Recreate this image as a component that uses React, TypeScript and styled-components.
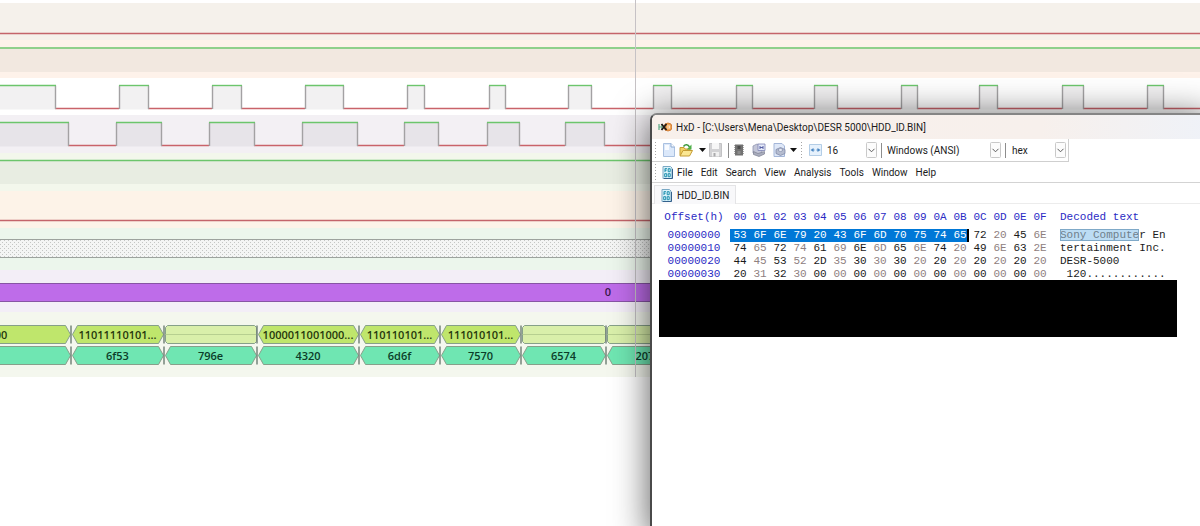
import React from "react";
import styled, { createGlobalStyle, css } from "styled-components";

const GlobalStyle = createGlobalStyle`
  *, *::before, *::after { box-sizing: border-box; }
  html, body, #root { height: 100%; }
  body {
    margin: 0;
    background: #ffffff;
    font-family: Roboto, "Open Sans", sans-serif;
  }
  button, select { font: inherit; color: inherit; }
`;

/* ---------- Logic analyser ---------- */

const Desktop = styled.main`
  position: relative;
  min-height: 100%;
  overflow: hidden;
`;

const Analyser = styled.section`
  position: relative;
  display: flex;
  flex-direction: column;
  padding-top: 3px;
`;

const Track = styled.div<{ $height: number; $tint: string }>`
  height: ${(p) => p.$height}px;
  background: ${(p) => p.$tint};
`;

const Plot = styled.svg`
  display: block;
  width: 100%;
  height: 100%;
  text {
    font-family: "Open Sans", "Noto Sans", sans-serif;
    font-size: 11px;
    font-weight: 600;
    text-anchor: middle;
  }
`;

const Cursor = styled.div`
  position: absolute;
  top: 0;
  bottom: 0;
  left: 635px;
  width: 1px;
  background: #c6c2c5;
`;

const GREEN = "#6cc56c";
const RED = "#c9636a";
const EDGE = "#a3a1a3";
const FAR = 4000;

type Pulse = [number, number];

const clockPulses: Pulse[] = [
  [-2, 55], [119, 148], [212, 241], [305, 343], [407, 424], [489, 505],
  [568, 591], [653, 671], [736, 752], [814, 837], [901, 917], [979, 997],
  [1062, 1083], [1147, 1163],
];

const strobePulses: Pulse[] = [
  [-2, 68], [116, 161], [209, 254], [302, 357], [404, 438], [487, 519], [565, 604],
];

function Wave({ pulses, fill }: { pulses: Pulse[]; fill: string }) {
  const high = 7.5;
  const low = 30.5;
  return (
    <Plot aria-hidden="true">
      {pulses.map(([a, b], i) => {
        const next = pulses[i + 1]?.[0] ?? FAR;
        return (
          <g key={a} strokeWidth="1.4">
            <rect x={a} y={high} width={b - a} height={low - high + 1} fill={fill} />
            <path d={`M${b} ${low}H${next}`} stroke={RED} />
            <path d={`M${a + 0.5} ${high}V${low + 0.5}M${b + 0.5} ${high}V${low + 0.5}`} stroke={EDGE} />
            <path d={`M${a} ${high}H${b + 1}`} stroke={GREEN} />
          </g>
        );
      })}
    </Plot>
  );
}

function Level({ y, color, under }: { y: number; color: string; under?: [number, number, string] }) {
  return (
    <Plot aria-hidden="true">
      {under && <rect x="0" y={under[0]} width="100%" height={under[1]} fill={under[2]} />}
      <line x1="0" x2="100%" y1={y} y2={y} stroke={color} strokeWidth="1.5" />
    </Plot>
  );
}

type BusValue = { from: number; to: number; text?: string; at?: number; open?: boolean };

const edges = [71, 164, 257, 359, 440, 521, 606];

const bits: BusValue[] = [
  { from: -40, to: 71, text: "00", at: 1 },
  { from: 71, to: 164, text: "11011110101..." },
  { from: 164, to: 257, open: true },
  { from: 257, to: 359, text: "1000011001000..." },
  { from: 359, to: 440, text: "110110101..." },
  { from: 440, to: 521, text: "111010101..." },
  { from: 521, to: 606, open: true },
  { from: 606, to: 700, open: true },
];

const words: BusValue[] = [
  { from: -40, to: 71 },
  { from: 71, to: 164, text: "6f53" },
  { from: 164, to: 257, text: "796e" },
  { from: 257, to: 359, text: "4320" },
  { from: 359, to: 440, text: "6d6f" },
  { from: 440, to: 521, text: "7570" },
  { from: 521, to: 606, text: "6574" },
  { from: 606, to: 690, text: "2072" },
];

function Bus({ y, values, fill, ink }: { y: number; values: BusValue[]; fill: string; ink: string }) {
  return (
    <g>
      {values.map(({ from, to, text, at, open }) => {
        const a = from + 1.5;
        const b = to - 0.5;
        const k = open ? 2 : 5;
        const mid = y + 9;
        const end = y + 18;
        const d = open
          ? `M${a} ${y + k}L${a + k} ${y}H${b - k}L${b} ${y + k}V${end - k}L${b - k} ${end}H${a + k}L${a} ${end - k}Z`
          : `M${a} ${mid}L${a + k} ${y}H${b - k}L${b} ${mid}L${b - k} ${end}H${a + k}Z`;
        return (
          <g key={from}>
            <path d={d} fill={open ? "#d9efaa" : fill} stroke="#86a08a" />
            {open && <path d={`M${a} ${mid}H${b}`} stroke="#b7cf90" />}
            {text && <text x={at ?? (from + to) / 2} y={y + 13} fill={ink}>{text}</text>}
          </g>
        );
      })}
      {edges.map((x) => (
        <path key={x} d={`M${x} ${y}V${y + 18}`} stroke="#75857a" strokeWidth="1.5" />
      ))}
    </g>
  );
}

function LogicAnalyser() {
  return (
    <Analyser aria-label="Logic analyser">
      <Track $height={37} $tint="#fdf2ea">
        <Level y={30.5} color="#c4646a" under={[0, 37, "#f5f1eb"]} />
      </Track>
      <Track $height={38} $tint="#fef2ea">
        <Level y={8} color={GREEN} under={[9, 23, "#f2e8e0"]} />
      </Track>
      <Track $height={37} $tint="#ffffff">
        <Wave pulses={clockPulses} fill="#f2f1f2" />
      </Track>
      <Track $height={38} $tint="#f3f0f4">
        <Wave pulses={strobePulses} fill="#e7e4e9" />
      </Track>
      <Track $height={38} $tint="#f3f7ec">
        <Level y={7.5} color={GREEN} under={[8, 23, "#e8ede2"]} />
      </Track>
      <Track $height={37} $tint="#fdf3e8">
        <Level y={29.5} color="#c4646a" />
      </Track>
      <Track $height={42} $tint="#ecf6ec">
        <Plot aria-hidden="true">
          <defs>
            <pattern id="speckle" width="4" height="4" patternUnits="userSpaceOnUse">
              <rect width="4" height="4" fill="#f4f5f4" />
              <rect width="1" height="1" fill="#c4c6c4" />
              <rect x="2" y="2" width="1" height="1" fill="#c4c6c4" />
            </pattern>
          </defs>
          <rect x="-2" y="11.5" width="110%" height="18" fill="url(#speckle)" stroke="#9da39e" />
        </Plot>
      </Track>
      <Track $height={42} $tint="#f3eef7">
        <Plot>
          <rect x="-2" y="13.5" width="110%" height="18" fill="#be6ce9" stroke="#8754a4" />
          <text x="608" y="26" fill="#38184a">0</text>
        </Plot>
      </Track>
      <Track $height={65} $tint="#f4f7ee">
        <Plot>
          <Bus y={13.5} values={bits} fill="#bfe66c" ink="#26360c" />
          <Bus y={34.5} values={words} fill="#6fe6b2" ink="#0b3d29" />
        </Plot>
      </Track>
      <Cursor />
    </Analyser>
  );
}

/* ---------- Hex editor window ---------- */

const Window = styled.section`
  position: absolute;
  top: 113px;
  left: 650px;
  right: -10px;
  bottom: -10px;
  display: flex;
  flex-direction: column;
  background: #ffffff;
  border: 2px solid #4a4a4a;
  border-top-color: #858585;
  border-radius: 7px 0 0 0;
  box-shadow: 0 4px 36px rgba(0, 0, 0, 0.66);
  color: #1c1c1c;
  font-size: 10px;
  overflow: hidden;
`;

const TitleBar = styled.header`
  display: flex;
  align-items: center;
  gap: 4px;
  height: 24px;
  padding-left: 6px;
  background: linear-gradient(90deg, #f8f0eb 0%, #f7f0ec 70%, #eff2f8 100%);
  white-space: nowrap;
`;

const Title = styled.h1`
  margin: 0;
  font-size: 10px;
  font-weight: 400;
`;

const Toolbar = styled.div`
  display: flex;
  align-items: center;
  align-self: flex-start;
  height: 23px;
  padding-right: 2px;
  border-right: 1px solid #cfcfcf;
  border-bottom: 1px solid #cfcfcf;
`;

const Grip = styled.span`
  width: 1px;
  height: 17px;
  margin: 0 6px 0 3px;
  background: repeating-linear-gradient(#a6a6a6 0 1px, transparent 1px 3px);
`;

const Divider = styled.span<{ $after?: number }>`
  width: 1px;
  height: 15px;
  margin: 0 ${(p) => p.$after ?? 0}px 0 4px;
  background: #8d8d8d;
`;

const ToolButton = styled.button<{ $width?: number }>`
  display: grid;
  place-items: center;
  width: ${(p) => p.$width ?? 20}px;
  height: 18px;
  padding: 0;
  border: 0;
  background: none;
`;

const Picker = styled.label<{ $width: number }>`
  display: grid;
  grid-template-columns: 1fr 11px;
  align-items: center;
  width: ${(p) => p.$width}px;
  height: 18px;
`;

const PickerSelect = styled.select`
  grid-area: 1 / 1 / 2 / 3;
  height: 18px;
  padding: 0 12px 0 5px;
  border: 0;
  background: none;
  appearance: none;
`;

const PickerArrow = styled.svg`
  grid-area: 1 / 2;
  pointer-events: none;
`;

const MenuBar = styled.nav`
  display: flex;
  align-items: center;
  height: 21px;
  border-bottom: 1px solid #d3d3d3;
`;

const MenuItem = styled.button`
  height: 18px;
  padding: 0 4px;
  border: 0;
  background: none;
`;

const TabStrip = styled.div`
  display: flex;
  height: 21px;
  padding: 2px 0 0 2px;
  border-bottom: 1px solid #ececec;
`;

const Tab = styled.button`
  display: flex;
  align-items: center;
  gap: 5px;
  height: 19px;
  padding: 0 6px;
  border: 1px solid #e4e4e6;
  border-bottom: 0;
  background: #f8f8fa;
`;

const Editor = styled.div`
  padding: 7px 31px 0 7px;
  font-family: "Liberation Mono", monospace;
`;

const HexTable = styled.table`
  margin: 0 0 -1px 3px;
  border-collapse: collapse;
  table-layout: fixed;
  font-size: 11px;
  line-height: 13px;
  th, td { padding: 0; font-weight: 400; text-align: center; white-space: pre; }
  thead { color: #2a2ac4; }
  thead th { height: 18px; padding-bottom: 5px; }
  tbody th { color: #2a2ac4; }
  th:first-child { padding-right: 4px; }
`;

const OffsetCol = styled.col`width: 68px;`;
const ByteCol = styled.col`width: 20px;`;
const TextCol = styled.col`width: 120px;`;

const Byte = styled.td<{ $dim: boolean; $picked: boolean; $caret: boolean }>`
  color: ${(p) => (p.$dim ? "#8e8080" : "#1a1a1a")};
  ${(p) => p.$picked && css`background: #0078d7; color: #ffffff;`}
  ${(p) => p.$caret && css`background: linear-gradient(90deg, #0078d7 17px, #000000 17px 19px, transparent 19px);`}
`;

const Decoded = styled.td`
  && { padding-left: 10px; text-align: left; }
`;

const DecodedHead = styled.th`
  && { padding-left: 10px; text-align: left; }
`;

const Marked = styled.mark`
  background: #bcdcf4;
  color: #6f7f8c;
  outline: 1px solid #7fa9c8;
  outline-offset: -1px;
`;

const Redaction = styled.div`
  position: relative;
  height: 57px;
  background: #000000;
`;

const columns = Array.from({ length: 16 }, (_, i) => "0" + i.toString(16).toUpperCase());

const rows = [
  { offset: "00000000", bytes: "53 6F 6E 79 20 43 6F 6D 70 75 74 65 72 20 45 6E", marked: "Sony Compute", text: "r En", picked: 12 },
  { offset: "00000010", bytes: "74 65 72 74 61 69 6E 6D 65 6E 74 20 49 6E 63 2E", text: "tertainment Inc.", picked: 0 },
  { offset: "00000020", bytes: "44 45 53 52 2D 35 30 30 30 20 20 20 20 20 20 20", text: "DESR-5000", picked: 0 },
  { offset: "00000030", bytes: "20 31 32 30 00 00 00 00 00 00 00 00 00 00 00 00", text: " 120............", picked: 0 },
];

function AppIcon() {
  return (
    <svg width="14" height="12" viewBox="0 0 14 12" fill="none" aria-hidden="true">
      <path d="M1 3v6M4 3v6M1 6h3" stroke="#5aa884" strokeWidth="1.2" />
      <circle cx="10" cy="6" r="4" fill="#f1a453" stroke="#c9722c" strokeWidth=".8" />
      <path d="M10 4v4M11.500 4.500v3" stroke="#fbe3c4" />
      <path d="M3.500 3l5 6M8.500 3l-5 6" stroke="#201a16" strokeWidth="1.8" />
    </svg>
  );
}

function HexFileIcon() {
  return (
    <svg width="11" height="13" viewBox="0 0 11 13" fill="none" aria-hidden="true">
      <path d="M1 .5h7.500l1.500 1.500v10.500H1z" fill="#d9f2fa" stroke="#7aa9c4" />
      <path d="M10.500 3v9.500H2" stroke="#34618c" />
      <path d="M3 2.500v3.500M3 2.700h2M3 4.300h1.500M6.200 2.700h2v3h-2zM2.700 7.700h2v3h-2zM6.200 7.700h2v3h-2z" stroke="#1f8fae" />
    </svg>
  );
}

function NewIcon() {
  return (
    <svg width="12" height="14" viewBox="0 0 12 14" aria-hidden="true">
      <path d="M.5.500h7.500L11.500 4v9.500H.5z" fill="#dbe8fa" stroke="#a9c0e0" />
      <path d="M8 .5V4h3.500" fill="#fff" stroke="#8aa8d0" />
      <path d="M2 2h4v5H2z" fill="#f8fbff" />
    </svg>
  );
}

function OpenIcon() {
  return (
    <svg width="14" height="14" viewBox="0 0 14 14" fill="none" aria-hidden="true">
      <path d="M1 12.500V4.500h4l1 1.500h5v2" fill="#f2d162" stroke="#c59c34" />
      <path d="M1 13l3-5.500h9.500L10.500 13z" fill="#fbe792" stroke="#c59c34" />
      <path d="M4.500 3.500C6.500.8 9 1.500 10.500 4" stroke="#3f9a3f" strokeWidth="1.6" />
      <path d="M12.500 1.500v5H7.800z" fill="#4fb04a" />
    </svg>
  );
}

function SaveIcon() {
  return (
    <svg width="13" height="14" viewBox="0 0 13 14" aria-hidden="true">
      <path d="M.5.500h12v13H.5z" fill="#d2d2d4" stroke="#c2c2c4" />
      <path d="M3 0h7v6H3z" fill="#f7f7f7" />
      <path d="M3 9h7v4.500H3z" fill="#f0f0f0" />
      <path d="M4.500 10h2v3.500h-2z" fill="#aaaaac" />
    </svg>
  );
}

function MemoryIcon() {
  return (
    <svg width="10" height="12" viewBox="0 0 10 12" aria-hidden="true">
      <path d="M1 .5h8v11H1z" fill="#727272" />
      <path d="M.5 1v10M9.500 1v10" stroke="#aaaaaa" strokeDasharray="1 1" />
      <path d="M3.500 2h3v3h-3z" fill="#4c4c4c" />
      <path d="M3.500 7h3v3h-3z" fill="#8c8c8c" />
    </svg>
  );
}

function DiskIcon() {
  return (
    <svg width="14" height="14" viewBox="0 0 14 14" aria-hidden="true">
      <path d="M1 3l4-2 5 2v7l-4 2-5-2z" fill="#c3c6d8" stroke="#8f94b0" strokeWidth=".8" />
      <path d="M6 1h7v6.500H6z" fill="#e4e9f8" stroke="#7d84b4" strokeWidth=".8" />
      <path d="M8 3v3M11 3v3M8 4.500h3" stroke="#5660a4" />
      <path d="M1.500 8.500L6 10.500l6.500-2v2.500L7 13.500l-5.500-2z" fill="#a9adbd" stroke="#7c8092" strokeWidth=".7" />
    </svg>
  );
}

function ImageIcon() {
  return (
    <svg width="13" height="14" viewBox="0 0 13 14" aria-hidden="true">
      <path d="M1 .5h8L11.500 3v10.500H1z" fill="#dfe8f8" stroke="#a4b6d8" />
      <path d="M3 6.500l4.500-2 4.500 2v4L7.500 12.500 3 10.500z" fill="#b5bccf" stroke="#7f89a8" strokeWidth=".8" />
      <ellipse cx="7.500" cy="7" rx="2.200" ry="1.400" fill="#edf1fa" stroke="#7f89a8" strokeWidth=".7" />
    </svg>
  );
}

function WidthIcon() {
  return (
    <svg width="13" height="12" viewBox="0 0 13 12" aria-hidden="true">
      <path d="M.5.500h12v11H.5z" fill="#e6f1fc" stroke="#b3cde6" />
      <path d="M1.500 6L4.500 4v4zM11.500 6L8.500 4v4z" fill="#4a86c2" />
      <path d="M4 6h1.500M7.500 6H9" stroke="#4a86c2" />
    </svg>
  );
}

function Caret() {
  return (
    <svg width="7" height="4" viewBox="0 0 7 4" aria-hidden="true">
      <path d="M0 0h7L3.500 4z" fill="#111111" />
    </svg>
  );
}

function Choice({ label, value, width }: { label: string; value: string; width: number }) {
  return (
    <Picker $width={width}>
      <PickerSelect aria-label={label} defaultValue={value}>
        <option>{value}</option>
      </PickerSelect>
      <PickerArrow width="11" height="16" viewBox="0 0 11 16" fill="none" aria-hidden="true">
        <rect x=".5" y=".5" width="10" height="15" rx="1" fill="#fcfcfc" stroke="#c9c9c9" />
        <path d="M2.500 6.800L5.500 9.800l3-3" stroke="#5c5c5c" />
      </PickerArrow>
    </Picker>
  );
}

function HexEditor() {
  return (
    <Window aria-label="HxD">
      <TitleBar>
        <AppIcon />
        <Title>HxD - [C:\Users\Mena\Desktop\DESR 5000\HDD_ID.BIN]</Title>
      </TitleBar>
      <Toolbar role="toolbar">
        <Grip />
        <ToolButton $width={13} aria-label="New"><NewIcon /></ToolButton>
        <ToolButton $width={22} aria-label="Open"><OpenIcon /></ToolButton>
        <ToolButton $width={10} aria-label="Open recent"><Caret /></ToolButton>
        <ToolButton $width={17} aria-label="Save"><SaveIcon /></ToolButton>
        <Divider />
        <ToolButton aria-label="Open main memory"><MemoryIcon /></ToolButton>
        <ToolButton aria-label="Open disk"><DiskIcon /></ToolButton>
        <ToolButton aria-label="Open disk image"><ImageIcon /></ToolButton>
        <ToolButton $width={9} aria-label="More disk images"><Caret /></ToolButton>
        <Grip />
        <ToolButton $width={14} aria-label="Bytes per row"><WidthIcon /></ToolButton>
        <Choice label="Bytes per row" value="16" width={55} />
        <Divider />
        <Choice label="Character set" value="Windows (ANSI)" width={119} />
        <Divider $after={1} />
        <Choice label="Offset base" value="hex" width={59} />
      </Toolbar>
      <MenuBar>
        <Grip />
        <HexFileIcon />
        <MenuItem>File</MenuItem>
        <MenuItem>Edit</MenuItem>
        <MenuItem>Search</MenuItem>
        <MenuItem>View</MenuItem>
        <MenuItem>Analysis</MenuItem>
        <MenuItem>Tools</MenuItem>
        <MenuItem>Window</MenuItem>
        <MenuItem>Help</MenuItem>
      </MenuBar>
      <TabStrip>
        <Tab><HexFileIcon />HDD_ID.BIN</Tab>
      </TabStrip>
      <Editor>
        <HexTable>
          <colgroup>
            <OffsetCol />
            {columns.map((c) => <ByteCol key={c} />)}
            <TextCol />
          </colgroup>
          <thead>
            <tr>
              <th scope="col">Offset(h)</th>
              {columns.map((c) => <th scope="col" key={c}>{c}</th>)}
              <DecodedHead scope="col">Decoded text</DecodedHead>
            </tr>
          </thead>
          <tbody>
            {rows.map((row) => (
              <tr key={row.offset}>
                <th scope="row">{row.offset}</th>
                {row.bytes.split(" ").map((b, i) => (
                  <Byte key={i} $dim={i % 2 === 1} $picked={i < row.picked} $caret={i === row.picked - 1}>{b}</Byte>
                ))}
                <Decoded>{row.marked && <Marked>{row.marked}</Marked>}{row.text}</Decoded>
              </tr>
            ))}
          </tbody>
        </HexTable>
        <Redaction />
      </Editor>
    </Window>
  );
}

export default function App() {
  return (
    <>
      <GlobalStyle />
      <Desktop>
        <LogicAnalyser />
        <HexEditor />
      </Desktop>
    </>
  );
}
